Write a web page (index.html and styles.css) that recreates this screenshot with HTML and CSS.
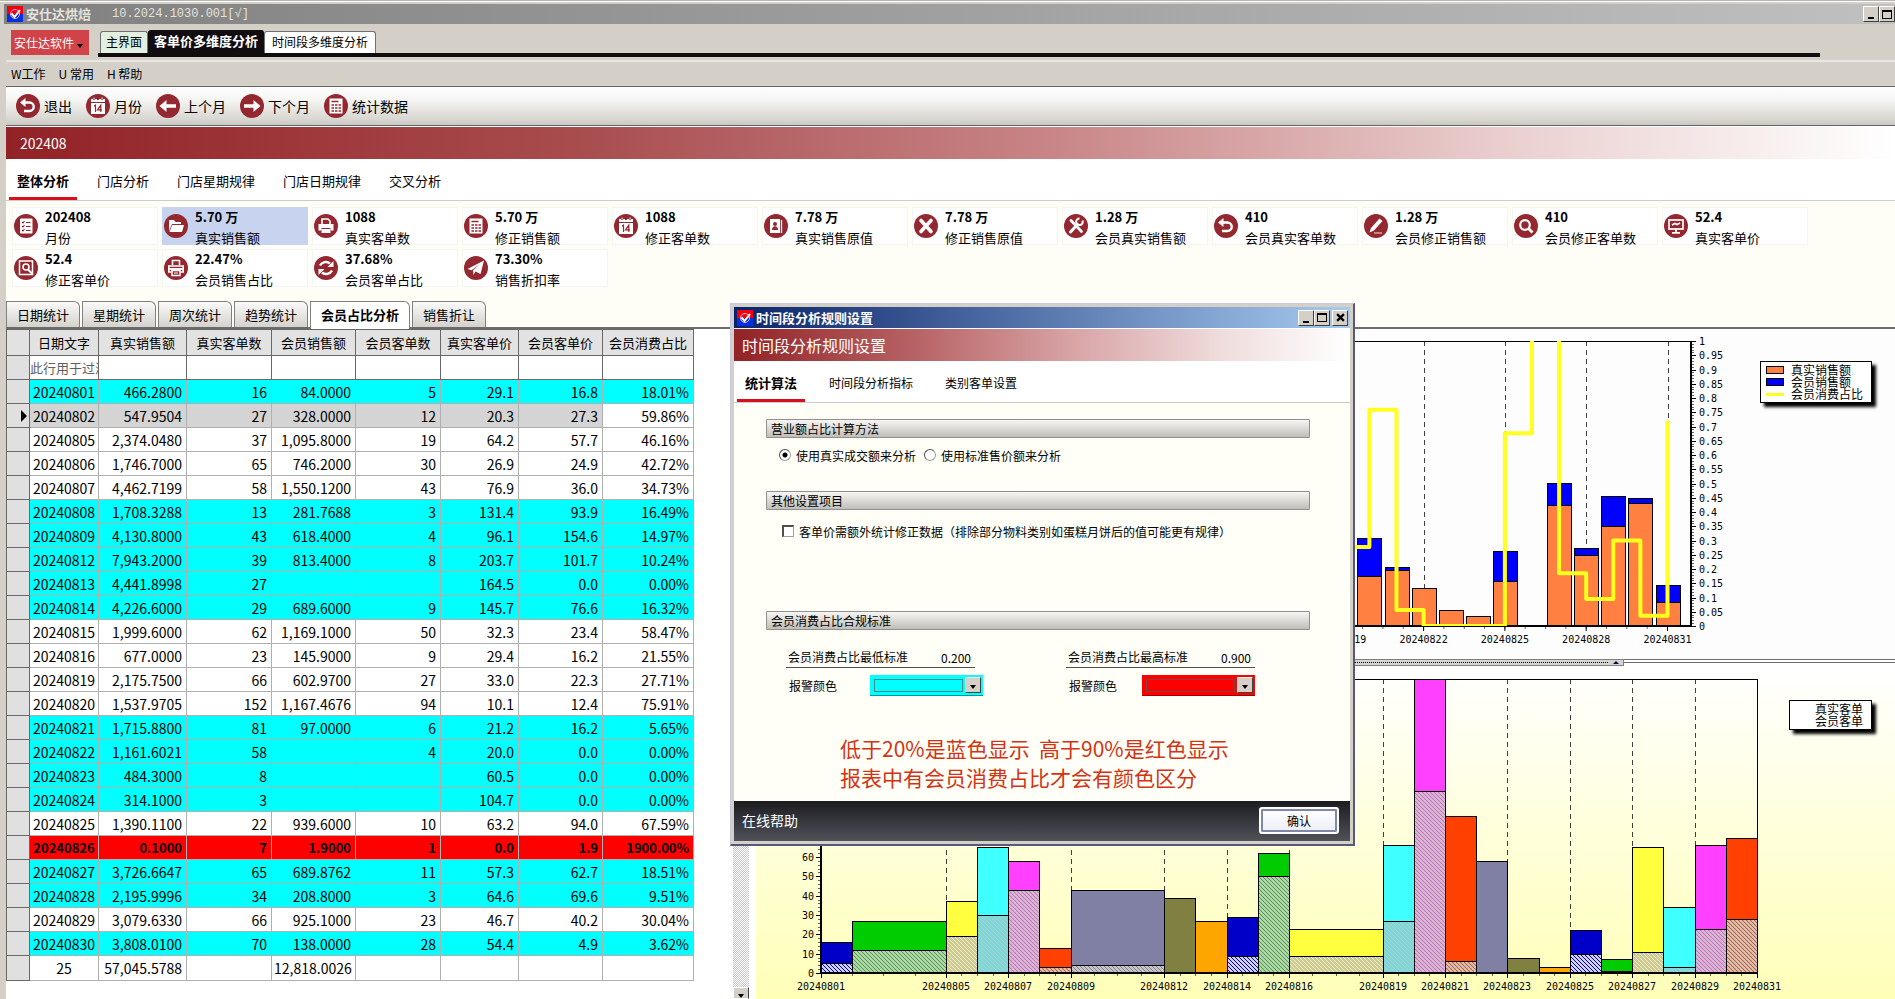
FILE: index.html
```html
<!DOCTYPE html>
<html lang="zh-CN">
<head>
  <meta charset="UTF-8">
  <title>安仕达烘焙</title>
  <link rel="stylesheet" href="styles.css">
</head>
<body>

  <svg class="sprite" aria-hidden="true">
    <symbol id="logo" viewBox="0 0 16 16">
      <rect width="16" height="8" fill="#f00010"/>
      <rect y="8" width="16" height="8" fill="#0030e0"/>
      <circle cx="8" cy="8" r="4.5" fill="none" stroke="#f0b0d0" stroke-width="1"/>
      <path d="M4.5 7.5l3 3.5L13 4" fill="none" stroke="#fff" stroke-width="2"/>
    </symbol>
    <symbol id="undo" viewBox="0 0 24 24">
      <path d="M7 8.5h6.5a4.2 4.2 0 0 1 0 8.5H8" fill="none" stroke="#fff" stroke-width="2.4"/>
      <path d="M9.5 4v9L4 8.5z" fill="#fff"/>
    </symbol>
    <symbol id="calendar" viewBox="0 0 24 24">
      <path d="M5 5h14v3H5zM5 9h14v11H5z" fill="#fff"/>
      <path d="M8 3v3M12 3v3M16 3v3" stroke="#942830" stroke-width="2"/>
      <path d="M8 3.5v2M16 3.5v2" stroke="#fff"/>
      <path d="M8 12l1.5-1v7M16 15.8h-4.5l3.3-4.6V18" fill="none" stroke="#942830" stroke-width="1.2"/>
    </symbol>
    <symbol id="left" viewBox="0 0 24 24">
      <path d="M3.5 12l7-6v4.2H20v3.6h-9.500V18z" fill="#fff"/>
    </symbol>
    <symbol id="right" viewBox="0 0 24 24">
      <path d="M20.500 12l-7-6v4.200H4v3.600h9.500V18z" fill="#fff"/>
    </symbol>
    <symbol id="calc" viewBox="0 0 24 24">
      <rect x="5.500" y="4.500" width="13" height="15" fill="#fff"/>
      <path d="M7.500 7.500h7M7.500 11h2.500M11 11h2.500M14.500 11h2.500M7.500 14h2.500M11 14h2.500M14.500 14h2.500M7.500 17h2.500M11 17h2.500M14.500 17h2.500" stroke="#942830" stroke-width="1.700"/>
    </symbol>
    <symbol id="list" viewBox="0 0 24 24">
      <rect x="6" y="4.500" width="12.500" height="15" rx="1" fill="#fff"/>
      <path d="M8 8l1 1 1.500-2M8 12l1 1 1.500-2M8 16l1 1 1.500-2M12 8.500h4.500M12 12.500h4.500M12 16.500h4.500" fill="none" stroke="#942830" stroke-width="1.100"/>
    </symbol>
    <symbol id="folder" viewBox="0 0 24 24">
      <path d="M5 17V6h5l1.500 2H17v2H8z" fill="#fff"/>
      <path d="M8.200 11H20l-2 7H5.500z" fill="#fff"/>
    </symbol>
    <symbol id="printer" viewBox="0 0 24 24">
      <path d="M8 10V5h6l2 2v3" fill="none" stroke="#fff" stroke-width="1.600"/>
      <path d="M4.500 10h15v6.500h-3V14h-9v2.500h-3z" fill="#fff"/>
      <rect x="7.500" y="15" width="9" height="4" fill="#fff"/>
    </symbol>
    <symbol id="printer2" viewBox="0 0 24 24">
      <path d="M8.500 9V4.500h7V9M4.800 16V10h14.400v6z" fill="none" stroke="#fff" stroke-width="1.600"/>
      <path d="M4 12h16v2H4z" fill="#fff"/>
      <path d="M8 14.500h8v5H8z" fill="#942830" stroke="#fff" stroke-width="1.400"/>
      <path d="M10 17h4" stroke="#fff"/>
    </symbol>
    <symbol id="contact" viewBox="0 0 24 24">
      <path d="M6 5h10v14H6z" fill="#fff"/>
      <path d="M17.500 6v13" stroke="#fff" stroke-width="1.300"/>
      <circle cx="11" cy="10" r="2" fill="#942830"/>
      <path d="M8 16c0-5 6-5 6 0z" fill="#942830"/>
    </symbol>
    <symbol id="cross" viewBox="0 0 24 24">
      <path d="M7 6.500l10 11M17 6.500l-10 11" stroke="#fff" stroke-width="3.600" stroke-linecap="round"/>
    </symbol>
    <symbol id="tools" viewBox="0 0 24 24">
      <path d="M7 6.500l10.500 11" stroke="#fff" stroke-width="2.800" stroke-linecap="round"/>
      <path d="M6.500 18l7-7.500" stroke="#fff" stroke-width="3" stroke-linecap="round"/>
      <path d="M18.500 6.500a3.300 3.300 0 1 1-3-2" fill="none" stroke="#fff" stroke-width="2"/>
    </symbol>
    <symbol id="pencil" viewBox="0 0 24 24">
      <path d="M15.500 4.500l3 2.500-8.500 9.500-4.500 2 1.500-4.500z" fill="#fff"/>
      <path d="M10 19h8" stroke="#e0a0a0" stroke-width="1.500"/>
    </symbol>
    <symbol id="search" viewBox="0 0 24 24">
      <circle cx="11" cy="11" r="4.800" fill="none" stroke="#fff" stroke-width="2.200"/>
      <path d="M14.500 14.500l4 4" stroke="#fff" stroke-width="2.800"/>
    </symbol>
    <symbol id="monitor" viewBox="0 0 24 24">
      <rect x="5" y="6" width="14" height="9" fill="none" stroke="#fff" stroke-width="1.700"/>
      <path d="M8 11l3-1.500 2 1 3-1.500M12 15v3M8 18.800h8" fill="none" stroke="#fff" stroke-width="1.700"/>
    </symbol>
    <symbol id="docsearch" viewBox="0 0 24 24">
      <path d="M5.500 5h13v13.500h-13z" fill="none" stroke="#fff" stroke-width="1.500"/>
      <circle cx="12" cy="11" r="3" fill="none" stroke="#fff" stroke-width="1.600"/>
      <path d="M14 13.500l4.500 4.500" stroke="#fff" stroke-width="2"/>
    </symbol>
    <symbol id="refresh" viewBox="0 0 24 24">
      <path d="M6 9.500a6.500 6.500 0 0 1 10-2M18 14.500a6.500 6.500 0 0 1-10 2" fill="none" stroke="#fff" stroke-width="2.400"/>
      <path d="M19.500 5v6h-6zM4.500 19v-6h6z" fill="#fff"/>
    </symbol>
    <symbol id="send" viewBox="0 0 24 24">
      <path d="M3.500 13L20 4.500 16.500 18l-5-2.500L9.500 19l-.5-4.800L16 8l-8.500 6.300z" fill="#fff"/>
    </symbol>
  </svg>

  <div class="app">
    <header class="titlebar">
      <svg class="logo"><use href="#logo"/></svg>
      <span class="app-name">安仕达烘焙</span>
      <span class="app-version">10.2024.1030.001[√]</span>
      <span class="window-buttons">
        <button type="button" class="win-btn" aria-label="最小化"><i class="min"></i></button>
        <button type="button" class="win-btn" aria-label="最大化"><i class="max"></i></button>
      </span>
    </header>

    <div class="app-tabs">
      <button type="button" class="brand-menu">安仕达软件 <i class="caret"></i></button>
      <nav class="page-tabs">
        <a href="#" class="home">主界面</a>
        <a href="#" class="active">客单价多维度分析</a>
        <a href="#">时间段多维度分析</a>
      </nav>
    </div>

    <nav class="menu">
      <a href="#">W工作</a>
      <a href="#">U 常用</a>
      <a href="#">H 帮助</a>
    </nav>

    <div class="toolbar">
      <button type="button"><svg class="icon"><use href="#undo"/></svg>退出</button>
      <button type="button"><svg class="icon"><use href="#calendar"/></svg>月份</button>
      <button type="button"><svg class="icon"><use href="#left"/></svg>上个月</button>
      <button type="button"><svg class="icon"><use href="#right"/></svg>下个月</button>
      <button type="button"><svg class="icon"><use href="#calc"/></svg>统计数据</button>
    </div>

    <h1 class="banner">202408</h1>

    <nav class="sub-tabs">
      <a href="#" class="active">整体分析</a>
      <a href="#">门店分析</a>
      <a href="#">门店星期规律</a>
      <a href="#">门店日期规律</a>
      <a href="#">交叉分析</a>
    </nav>

    <section class="cards" id="cards"></section>

    <nav class="sheet-tabs">
      <a href="#">日期统计</a>
      <a href="#">星期统计</a>
      <a href="#">周次统计</a>
      <a href="#">趋势统计</a>
      <a href="#" class="active">会员占比分析</a>
      <a href="#">销售折让</a>
    </nav>

    <main class="workspace">
      <div class="table-pane">
        <table id="salesTable">
          <colgroup>
            <col class="c-mark"><col class="c-date"><col class="c-sale"><col class="c-num"><col class="c-msale">
            <col class="c-num"><col class="c-price"><col class="c-mprice"><col>
          </colgroup>
          <thead>
            <tr>
              <th></th>
              <th>日期文字</th>
              <th>真实销售额</th>
              <th>真实客单数</th>
              <th>会员销售额</th>
              <th>会员客单数</th>
              <th>真实客单价</th>
              <th>会员客单价</th>
              <th>会员消费占比</th>
            </tr>
            <tr class="filter">
              <td></td><td>此行用于过滤</td><td></td><td></td><td></td><td></td><td></td><td></td><td></td>
            </tr>
          </thead>
          <tbody></tbody>
          <tfoot>
            <tr>
              <td></td><td>25</td><td>57,045.5788</td><td></td><td>12,818.0026</td><td></td><td></td><td></td><td></td>
            </tr>
          </tfoot>
        </table>
      </div>
      <div class="scrollbar"><span class="scroll-btn"><i class="caret"></i></span></div>
      <div class="charts">
        <section class="chart chart-sales">
          <svg id="salesChart"></svg>
          <ul class="legend">
            <li><i class="swatch orange"></i>真实销售额</li>
            <li><i class="swatch blue"></i>会员销售额</li>
            <li><i class="swatch line"></i>会员消费占比</li>
          </ul>
        </section>
        <div class="splitter"><span class="grip"><i></i></span></div>
        <section class="chart chart-orders">
          <svg id="ordersChart"></svg>
          <ul class="legend">
            <li><i class="swatch"></i>真实客单</li>
            <li><i class="swatch"></i>会员客单</li>
          </ul>
        </section>
      </div>
    </main>

    <!-- Rule settings window -->
    <div class="dialog" role="dialog" aria-labelledby="dialogTitle">
      <div class="dialog-title">
        <svg class="logo"><use href="#logo"/></svg>
        <span id="dialogTitle">时间段分析规则设置</span>
        <span class="window-buttons">
          <button type="button" class="win-btn" aria-label="最小化"><i class="min"></i></button>
          <button type="button" class="win-btn" aria-label="最大化"><i class="max"></i></button>
          <button type="button" class="win-btn close" aria-label="关闭"><svg viewBox="0 0 8 8"><path d="M1 1l6 6M7 1L1 7" stroke="#000" stroke-width="2"/></svg></button>
        </span>
      </div>
      <h2 class="banner">时间段分析规则设置</h2>
      <nav class="sub-tabs">
        <a href="#" class="active">统计算法</a>
        <a href="#">时间段分析指标</a>
        <a href="#">类别客单设置</a>
      </nav>
      <form class="dialog-body">
        <h3>营业额占比计算方法</h3>
        <div class="row">
          <label><input type="radio" name="method" checked>使用真实成交额来分析</label>
          <label><input type="radio" name="method">使用标准售价额来分析</label>
        </div>
        <h3>其他设置项目</h3>
        <div class="row row-check">
          <label><input type="checkbox">客单价需额外统计修正数据（排除部分物料类别如蛋糕月饼后的值可能更有规律）</label>
        </div>
        <h3>会员消费占比合规标准</h3>
        <div class="limits">
          <div class="limit">
            <div class="limit-value">
              <label for="minRate">会员消费占比最低标准</label>
              <input type="text" id="minRate" value="0.200">
            </div>
            <div class="limit-color">
              <label for="minColor">报警颜色</label>
              <span class="combo cyan"><select id="minColor"></select><span class="drop"><i class="caret"></i></span></span>
            </div>
          </div>
          <div class="limit">
            <div class="limit-value">
              <label for="maxRate">会员消费占比最高标准</label>
              <input type="text" id="maxRate" value="0.900">
            </div>
            <div class="limit-color high">
              <label for="maxColor">报警颜色</label>
              <span class="combo red"><select id="maxColor"></select><span class="drop"><i class="caret"></i></span></span>
            </div>
          </div>
        </div>
        <p class="hint">低于20%是蓝色显示&nbsp; 高于90%是红色显示<br>报表中有会员消费占比才会有颜色区分</p>
      </form>
      <footer class="dialog-footer">
        <a href="#">在线帮助</a>
        <button type="button">确认</button>
      </footer>
    </div>
  </div>

  <script src="script.js"></script>
</body>
</html>
```
FILE: styles.css
```css
* {
  box-sizing: border-box;
}
body {
  margin: 0;
  font-family: "Noto Sans CJK SC", sans-serif;
  font-size: 13px;
  color: #000;
  background-color: #d4d0c8;
}
a {
  color: inherit;
  text-decoration: none;
}
button, input, select {
  font-family: inherit;
  margin: 0;
}
h1, h2, h3, p, ul {
  margin: 0;
  padding: 0;
  font-weight: normal;
  list-style: none;
}
.sprite {
  position: absolute;
  width: 0;
  height: 0;
}
.app {
  position: relative;
  height: 100vh;
  overflow: hidden;
  padding: 4px 0 0 6px;
  border-left: 1px solid #f0f0f0;
  margin-left: -1px;
  display: flex;
  flex-direction: column;
  box-shadow: inset 0 1px 0 #b8b4b0, inset 0 2px 0 #fff;
}
.caret {
  display: inline-block;
  border: 3px solid transparent;
  border-top: 4px solid #000;
  border-bottom: 0;
}

/* title bar */
.titlebar {
  flex: 0 0 20px;
  display: flex;
  align-items: center;
  margin-left: -2px;
  padding-left: 3px;
  line-height: 20px;
  color: #e4e2dc;
  background: linear-gradient(to right, #808080, #c0c0c0);
}
.logo {
  width: 16px;
  height: 16px;
  flex: none;
}
.app-name {
  margin-left: 3px;
  font-weight: bold;
}
.app-version {
  margin-left: 21px;
  font-family: "Liberation Mono", "Noto Sans CJK SC", monospace;
  font-size: 12px;
}
.window-buttons {
  margin-left: auto;
  display: flex;
}
.win-btn {
  width: 16px;
  height: 16px;
  padding: 0;
  display: flex;
  align-items: center;
  justify-content: center;
  background: #d4d0c8;
  border: 1px solid #fff;
  border-right-color: #404040;
  border-bottom-color: #404040;
}
.win-btn .min {
  width: 6px;
  height: 2px;
  margin-top: 8px;
  background: #000;
}
.win-btn .max {
  width: 10px;
  height: 9px;
  border: 1px solid #000;
  border-top-width: 2px;
}
.win-btn.close {
  margin-left: 2px;
}
.win-btn svg {
  width: 9px;
  height: 9px;
}

/* page tabs */
.app-tabs {
  flex: 0 0 36px;
  display: flex;
  align-items: flex-start;
  padding: 6px 75px 0 5px;
}
.brand-menu {
  width: 78px;
  height: 25px;
  padding: 0 0 0 3px;
  border: 0;
  font-size: 12px;
  text-align: left;
  color: #fff;
  background: #d04449;
}
.page-tabs {
  flex: 1;
  display: flex;
  align-items: flex-end;
  height: 27px;
  margin-left: 9px;
  padding-left: 2px;
  border-bottom: 4px solid #100c10;
}
.page-tabs a {
  height: 22px;
  padding: 0 7px;
  font-size: 12px;
  line-height: 20px;
  background: #fff;
  border: 1px solid #707070;
  border-bottom: 0;
  border-radius: 3px 3px 0 0;
}
.page-tabs .home {
  padding: 0 5px;
  background: #e2f0e2;
}
.page-tabs .active {
  height: 23px;
  padding: 0 5px;
  font-size: 13px;
  font-weight: bold;
  color: #fff;
  background: #100c10;
  border-color: #100c10;
}

/* menu and toolbar */
.menu {
  flex: 0 0 27px;
  display: flex;
  gap: 13px;
  padding-left: 5px;
  font-size: 12px;
  line-height: 24px;
  border-top: 2px solid #e8e6e4;
  border-bottom: 1px solid #646464;
}
.toolbar {
  flex: 0 0 39px;
  display: flex;
  align-items: center;
  gap: 14px;
  padding-left: 10px;
  background: linear-gradient(#fff, #f4f4f2 35%, #d8d6d0 85%, #cac8c2);
  border-bottom: 1px solid #646464;
}
.toolbar button {
  display: flex;
  align-items: center;
  gap: 4px;
  padding: 0;
  border: 0;
  font-size: 14px;
  background: none;
}
.icon {
  flex: none;
  width: 24px;
  height: 24px;
  border-radius: 50%;
  background: #942830;
}
.banner {
  flex: 0 0 33px;
  padding-left: 14px;
  font-size: 14px;
  line-height: 32px;
  color: #fff;
  background: linear-gradient(to right, #922226, #a84c4e 30%, #c88486 55%, #ebd0d0 80%, #fff);
  border-top: 1px solid #fff;
}

/* underlined tabs */
.sub-tabs {
  flex: 0 0 42px;
  display: flex;
  gap: 12px;
  padding-left: 3px;
  background: #fff;
  border-bottom: 1px solid #cccccc;
}
.sub-tabs a {
  height: 41px;
  padding: 8px 8px 0;
  line-height: 28px;
  border-bottom: 3px solid transparent;
}
.sub-tabs .active {
  font-weight: bold;
  border-bottom-color: #d8101c;
}

/* figures */
.cards {
  display: flex;
  flex-wrap: wrap;
  gap: 4px;
  padding: 6px 6px 14px 6px;
  background: #fffef6;
}
.card {
  display: flex;
  align-items: center;
  gap: 7px;
  width: 146px;
  height: 38px;
  padding-left: 1px;
  background: #fff;
  border: 1px solid #f4f4f0;
}
.card.selected {
  background: #c8d4ef;
  border-color: #c8d4ef;
}
.card-text {
  align-self: flex-start;
  white-space: nowrap;
}
.card-text b {
  display: block;
  line-height: 18px;
}
.card-text span {
  display: block;
  line-height: 24px;
}
.sheet-tabs {
  flex: none;
  display: flex;
  gap: 2px;
  background: #fffef6;
  border-bottom: 2px solid #6c6c6c;
}
.sheet-tabs a {
  height: 26px;
  padding: 0 10px;
  line-height: 26px;
  background: linear-gradient(#fafafa, #d4d2cc);
  border: 1px solid #808080;
  border-bottom: 0;
  border-top-right-radius: 6px;
}
.sheet-tabs .active {
  height: 28px;
  margin-bottom: -2px;
  font-weight: bold;
  background: #fff;
}

/* work area */
.workspace {
  flex: 1;
  min-height: 0;
  display: grid;
  grid-template-columns: minmax(690px, 727fr) 16px minmax(0, 1146fr);
  background: #fff;
}
.table-pane {
  overflow: hidden;
}
table {
  width: 688px;
  table-layout: fixed;
  border-collapse: collapse;
}
.c-mark { width: 23px; }
.c-date { width: 69px; }
.c-sale { width: 88px; }
.c-num { width: 85px; }
.c-msale { width: 84px; }
.c-price { width: 78px; }
.c-mprice { width: 84px; }
th, td {
  height: 24px;
  padding: 0 4px 0 2px;
  overflow: hidden;
  white-space: nowrap;
  text-align: right;
  font-size: 14px;
  line-height: 20px;
  border: 1px solid #b0b0b0;
}
th {
  height: 26px;
  padding: 0;
  font-size: 13px;
  font-weight: normal;
  text-align: center;
  background: #e2e2e2;
  border-color: #686868;
}
tr td:first-child {
  padding: 0 2px;
  background: #e0e0e0;
  border-color: #686868;
}
td:nth-child(2) {
  text-align: center;
  padding: 0 2px;
}
.filter td {
  font-size: 13px;
  color: #606060;
  text-align: left;
  text-overflow: clip;
  border-color: #686868;
}
.filter td:nth-child(2) {
  padding: 0;
  text-align: left;
}
.low td {
  background: #00ffff;
}
.high-rate td {
  font-size: 13px;
  font-weight: bold;
  background: #ff0000;
}
.current td {
  background: #d4d4d4;
}
.current td:last-child {
  background: #fff;
}
.current td:first-child::before {
  content: "";
  display: block;
  margin-left: auto;
  width: 0;
  border: 6px solid transparent;
  border-left: 6px solid #000;
  border-right: 0;
}
tfoot td {
  height: 25px;
}
.scrollbar {
  display: flex;
  align-items: flex-end;
  background: repeating-conic-gradient(#c8c8c8 0 25%, #fff 0 50%) 0 0 / 2px 2px;
}
.scroll-btn {
  width: 16px;
  height: 12px;
  text-align: center;
  line-height: 10px;
  background: #d4d0c8;
  border: 1px solid #fff;
  border-right-color: #404040;
}
.charts {
  display: flex;
  flex-direction: column;
  min-height: 0;
  padding-left: 7px;
}
.chart {
  display: flex;
  align-items: flex-start;
  min-height: 0;
}
.chart svg {
  flex: 1;
  min-width: 0;
  height: 100%;
}
.chart text {
  font-family: "DejaVu Sans Mono", monospace;
  font-size: 10px;
}
.chart-sales {
  flex: 0 0 330px;
  background: #fdfdfd;
}
.chart-orders {
  flex: 1;
  background: linear-gradient(#fff, #ffffb8);
}
.legend {
  flex: none;
  margin: 32px 23px 0 0;
  padding: 2px 8px 2px 5px;
  font-size: 12px;
  line-height: 12px;
  background: #fff;
  border: 1px solid #000;
  box-shadow: 4px 4px 3px #000;
}
.legend li {
  display: flex;
  align-items: center;
  gap: 7px;
}
.chart-orders .legend {
  margin-top: 34px;
  padding-left: 0;
}
.swatch {
  width: 18px;
  height: 8px;
}
.orange {
  background: #ff8040;
  border: 1px solid #000;
}
.blue {
  background: #0000ff;
  border: 1px solid #000;
}
.line {
  height: 3px;
  background: #ffff20;
}
.splitter {
  flex: 0 0 7px;
  display: flex;
  justify-content: center;
  background: linear-gradient(#707070 1px, #fff 1px 3px, #707070 3px 4px, #fff 4px);
}
.grip {
  width: 596px;
  display: flex;
  justify-content: flex-end;
  align-items: center;
  padding: 0 4px 0 10px;
  background: #d4d4d0;
  border: 1px solid #808080;
  border-left: 0;
}
.grip::before {
  content: "";
  flex: 1;
  margin-right: 5px;
  border-top: 1px dotted #000;
}
.grip i {
  border: 3px solid transparent;
  border-bottom: 3px solid #000040;
  border-top: 0;
}

/* settings window */
.dialog {
  position: absolute;
  left: 730px;
  top: 303px;
  width: 625px;
  height: 543px;
  display: flex;
  flex-direction: column;
  padding: 3px;
  background: #d4d0c8;
  border: 1px solid #c8c8e0;
  border-right: 2px solid #58587c;
  border-bottom: 2px solid #58587c;
}
.dialog-title {
  flex: 0 0 21px;
  display: flex;
  align-items: center;
  padding: 0 2px 0 3px;
  font-weight: bold;
  line-height: 20px;
  color: #fff;
  background: linear-gradient(to right, #0a246a, #a6caf0);
}
.dialog-title .logo {
  margin-right: 3px;
}
.dialog .banner {
  padding-left: 8px;
  font-size: 16px;
  background: linear-gradient(to right, #922226, #b86466 30%, #d8a4a6 55%, #f0dede 80%, #fff);
}
.dialog .sub-tabs {
  gap: 16px;
}
.dialog .sub-tabs a {
  font-size: 12px;
}
.dialog .sub-tabs .active {
  font-size: 13px;
}
.dialog-body {
  flex: 1;
  padding: 16px 40px 0 32px;
  font-size: 12px;
  background: #fffff8;
}
.dialog-body h3 {
  height: 19px;
  padding-left: 4px;
  font-size: 12px;
  line-height: 18px;
  background: linear-gradient(#f6f6f4, #dcdad6 50%, #c0beb8);
  border: 1px solid #909090;
  border-radius: 1px;
}
.row {
  display: flex;
  gap: 8px;
  height: 24px;
  margin: 5px 0 24px;
  padding-left: 13px;
}
.row label {
  display: flex;
  align-items: center;
}
.row input {
  appearance: none;
  width: 12px;
  height: 12px;
  margin-right: 5px;
  background: #fff;
  border: 1px solid #a0a0a0;
  border-top: 2px solid #505050;
  border-left: 2px solid #505050;
}
.row input[type="radio"] {
  border-width: 1px;
  border-radius: 50%;
}
.row input[type="radio"]:checked {
  background: radial-gradient(#000 2px, #fff 3px);
}
.row-check {
  margin: 9px 0 68px;
  padding-left: 16px;
}
.limits {
  display: grid;
  grid-template-columns: 189px 189px;
  column-gap: 91px;
  margin-top: 18px;
  padding-left: 20px;
}
.limit-value {
  display: flex;
  height: 20px;
  padding: 0 4px 0 2px;
  line-height: 18px;
  border-bottom: 1px solid #505050;
}
.limit-value input {
  flex: 1;
  min-width: 0;
  padding: 0;
  border: 0;
  font-size: 12px;
  text-align: right;
  background: none;
}
.limit-color {
  display: flex;
  width: 197px;
  margin-top: 7px;
  padding-left: 3px;
  line-height: 21px;
}
.limit-color.high {
  width: 189px;
}
.combo {
  display: flex;
  width: 113px;
  height: 21px;
  margin-left: auto;
  padding: 2px 2px 2px 4px;
  border-bottom: 1px solid rgba(0, 0, 0, 0.4);
}
.combo select {
  appearance: none;
  flex: 1;
  margin: 2px 2px 1px 0;
  padding: 0;
  background: none;
  border: 1px solid rgba(90, 90, 90, 0.7);
}
.cyan {
  background: #00ffff;
}
.red {
  background: #ff0000;
}
.drop {
  width: 16px;
  text-align: center;
  line-height: 12px;
  background: #d4d0c8;
  border: 1px solid #f0f0f0;
  border-right-color: #404040;
  border-bottom-color: #404040;
}
.hint {
  margin-top: 38px;
  padding-left: 74px;
  font-size: 21px;
  line-height: 29px;
  color: #d23414;
  white-space: nowrap;
}
.dialog-footer {
  flex: 0 0 40px;
  display: flex;
  align-items: center;
  justify-content: space-between;
  padding: 0 11px 2px 8px;
  color: #fff;
  font-size: 14px;
  background: linear-gradient(#1c1c20, #50525a);
}
.dialog-footer button {
  width: 80px;
  height: 27px;
  padding: 0;
  font-size: 12px;
  background: linear-gradient(#fff, #eceef6);
  border: 2px solid #fff;
  border-radius: 3px;
  box-shadow: inset 0 0 0 2px #8088a8;
}
```
FILE: script.js
```javascript
// date, sales, orders, member sales, member orders, price, member price, member rate
const rows = [
  ["20240801", "466.2800", "16", "84.0000", "5", "29.1", "16.8", "18.01%"],
  ["20240802", "547.9504", "27", "328.0000", "12", "20.3", "27.3", "59.86%"],
  ["20240805", "2,374.0480", "37", "1,095.8000", "19", "64.2", "57.7", "46.16%"],
  ["20240806", "1,746.7000", "65", "746.2000", "30", "26.9", "24.9", "42.72%"],
  ["20240807", "4,462.7199", "58", "1,550.1200", "43", "76.9", "36.0", "34.73%"],
  ["20240808", "1,708.3288", "13", "281.7688", "3", "131.4", "93.9", "16.49%"],
  ["20240809", "4,130.8000", "43", "618.4000", "4", "96.1", "154.6", "14.97%"],
  ["20240812", "7,943.2000", "39", "813.4000", "8", "203.7", "101.7", "10.24%"],
  ["20240813", "4,441.8998", "27", "", "", "164.5", "0.0", "0.00%"],
  ["20240814", "4,226.6000", "29", "689.6000", "9", "145.7", "76.6", "16.32%"],
  ["20240815", "1,999.6000", "62", "1,169.1000", "50", "32.3", "23.4", "58.47%"],
  ["20240816", "677.0000", "23", "145.9000", "9", "29.4", "16.2", "21.55%"],
  ["20240819", "2,175.7500", "66", "602.9700", "27", "33.0", "22.3", "27.71%"],
  ["20240820", "1,537.9705", "152", "1,167.4676", "94", "10.1", "12.4", "75.91%"],
  ["20240821", "1,715.8800", "81", "97.0000", "6", "21.2", "16.2", "5.65%"],
  ["20240822", "1,161.6021", "58", "", "4", "20.0", "0.0", "0.00%"],
  ["20240823", "484.3000", "8", "", "", "60.5", "0.0", "0.00%"],
  ["20240824", "314.1000", "3", "", "", "104.7", "0.0", "0.00%"],
  ["20240825", "1,390.1100", "22", "939.6000", "10", "63.2", "94.0", "67.59%"],
  ["20240826", "0.1000", "7", "1.9000", "1", "0.0", "1.9", "1900.00%"],
  ["20240827", "3,726.6647", "65", "689.8762", "11", "57.3", "62.7", "18.51%"],
  ["20240828", "2,195.9996", "34", "208.8000", "3", "64.6", "69.6", "9.51%"],
  ["20240829", "3,079.6330", "66", "925.1000", "23", "46.7", "40.2", "30.04%"],
  ["20240830", "3,808.0100", "70", "138.0000", "28", "54.4", "4.9", "3.62%"]
];

const cards = [
  ["list", "202408", "月份"],
  ["folder", "5.70 万", "真实销售额"],
  ["printer", "1088", "真实客单数"],
  ["calc", "5.70 万", "修正销售额"],
  ["calendar", "1088", "修正客单数"],
  ["contact", "7.78 万", "真实销售原值"],
  ["cross", "7.78 万", "修正销售原值"],
  ["tools", "1.28 万", "会员真实销售额"],
  ["undo", "410", "会员真实客单数"],
  ["pencil", "1.28 万", "会员修正销售额"],
  ["search", "410", "会员修正客单数"],
  ["monitor", "52.4", "真实客单价"],
  ["docsearch", "52.4", "修正客单价"],
  ["printer2", "22.47%", "会员销售占比"],
  ["refresh", "37.68%", "会员客单占比"],
  ["send", "73.30%", "销售折扣率"]
];

document.getElementById("cards").innerHTML = cards.map(([icon, value, label], i) => `
  <div class="card${i === 1 ? " selected" : ""}">
    <svg class="icon"><use href="#${icon}"/></svg>
    <div class="card-text"><b>${value}</b><span>${label}</span></div>
  </div>`).join("");

const num = s => parseFloat(s.replace(/,/g, "")) || 0;

function rowClass(row) {
  const rate = num(row[7]);
  if (row[0] === "20240802") return "current";
  if (rate < 20) return "low";
  if (rate > 90) return "high-rate";
  return "";
}

document.querySelector("#salesTable tbody").innerHTML = rows.map(row =>
  `<tr class="${rowClass(row)}"><td></td>${row.map(v => `<td>${v}</td>`).join("")}</tr>`
).join("");

const line = (x1, y1, x2, y2, extra = "") =>
  `<line x1="${x1}" y1="${y1}" x2="${x2}" y2="${y2}" stroke="#000" ${extra}/>`;
const rect = (x, y, w, h, fill) =>
  `<rect x="${x}" y="${y}" width="${w}" height="${h}" fill="${fill}" stroke="#000"/>`;
const text = (x, y, s, anchor = "middle") =>
  `<text x="${x}" y="${y}" text-anchor="${anchor}">${s}</text>`;
const dashed = 'stroke-dasharray="5 4" stroke-opacity="0.75"';

function drawSales() {
  const top = 12, base = 297, left = 76, right = 935;
  const x = d => 911.5 - 27.1 * (31 - d);
  const y = v => base - v * (base - top);
  let out = line(left, top + 0.5, right, top + 0.5);

  [22, 25, 28, 31].forEach(d => out += line(Math.round(x(d)) + 0.5, top, Math.round(x(d)) + 0.5, base, dashed));

  const data = rows.map(r => ({ day: +r[0].slice(6), sale: num(r[1]), member: num(r[3]), rate: num(r[7]) / 100 }));
  data.push({ day: 31, sale: 727, member: 526, rate: 0.72 });

  data.forEach(p => {
    if (p.sale < 1) return;
    const bx = Math.round(x(p.day) - 12) + 0.5;
    const y1 = Math.round(y(p.sale / 8800)) + 0.5;
    const y2 = Math.round(y((p.sale + p.member) / 8800)) + 0.5;
    out += rect(bx, y1, 24, base - y1, "#ff8040");
    if (p.member) out += rect(bx, y2, 24, y1 - y2, "#0000ff");
  });

  out += line(left, base, right, base, 'stroke-width="2"') + line(right, top, right, base + 1, 'stroke-width="2"');

  // stepped rate line, cut off at the top of the plot
  let path = "";
  data.forEach((p, i) => {
    const py = Math.max(y(p.rate), top - 60);
    path += i ? `H${x(p.day)}V${py}` : `M${x(p.day)} ${py}`;
  });
  out += `<clipPath id="plot"><rect x="${left}" y="${top}" width="${right - left}" height="${base - top}"/></clipPath>`;
  out += `<path d="${path}" clip-path="url(#plot)" fill="none" stroke="#ffff20" stroke-width="4" stroke-linejoin="round"/>`;

  for (let i = 0; i <= 20; i++) {
    const ty = Math.round(y(i / 20));
    out += line(right, ty + 0.5, right + 5, ty + 0.5);
    out += text(943, ty + 4, String(i / 20), "start");
    for (let k = 1; k < 5 && i < 20; k++) {
      const my = Math.round(y((i + k / 5) / 20)) + 0.5;
      out += line(right, my, right + 3, my, 'stroke-opacity="0.6"');
    }
  }
  [19, 22, 25, 28, 31].forEach(d => {
    out += line(x(d), base, x(d), base + 5) + text(x(d), 314, "202408" + d);
  });
  for (let d = 19; d < 31; d += 0.75) out += line(x(d), base, x(d), base + 3, 'stroke-opacity="0.6"');
  document.getElementById("salesChart").innerHTML = out;
}

function drawOrders() {
  const top = 13, base = 307, left = 65, right = 1001;
  const colors = ["#0000c8", "#00cc00", "#ffff40", "#40ffff", "#ff40ff", "#ff4000", "#8080a4", "#808040", "#ffa500"];
  const x = d => Math.round(left + 31.2 * (d - 1));
  const y = v => Math.round(base - v * 1.934);
  const ticks = [1, 5, 7, 9, 12, 14, 16, 19, 21, 23, 25, 27, 29, 31];
  let out = "";

  colors.forEach((c, i) => {
    const back = i === 0 ? "#d0d0ff" : i === 3 ? "#a0c8c8" : "#c8c4c0";
    out += `<pattern id="hatch${i}" width="4" height="4" patternUnits="userSpaceOnUse">
      <rect width="4" height="4" fill="${back}"/><path d="M-1 -1L5 5M3 -1L5 1M-1 3L1 5" stroke="${c}" stroke-width="1"/></pattern>`;
  });
  out += line(left, top + 0.5, right, top + 0.5) + line(right + 0.5, top, right + 0.5, base);
  ticks.slice(1, -1).forEach(d => out += line(x(d) + 0.5, top, x(d) + 0.5, base, dashed));

  rows.forEach((r, i) => {
    const from = +r[0].slice(6);
    const to = i + 1 < rows.length ? +rows[i + 1][0].slice(6) : 31;
    const c = i % 9;
    const total = y(num(r[2])) + 0.5, member = y(num(r[4])) + 0.5;
    out += rect(x(from) + 0.5, total, x(to) - x(from), base - total, colors[c]);
    if (num(r[4]) && c !== 7 && r[0] !== "20240822") {
      out += rect(x(from) + 0.5, member, x(to) - x(from), base - member, `url(#hatch${c})`);
    }
  });

  out += line(left, base, right + 1, base, 'stroke-width="2"') + line(left, top, left, base + 1, 'stroke-width="2"');
  for (let v = 0; v <= 60; v += 10) {
    out += line(left - 5, y(v) + 0.5, left, y(v) + 0.5) + text(left - 7, y(v) + 4, v, "end");
    for (let k = 2; k < 10; k += 2) out += line(left - 3, y(v + k) + 0.5, left, y(v + k) + 0.5, 'stroke-opacity="0.6"');
  }
  ticks.forEach((d, i) => {
    out += line(x(d) + 0.5, base, x(d) + 0.5, base + 5) + text(x(d), 324, "202408" + String(d).padStart(2, "0"));
    const next = ticks[i + 1];
    for (let k = 1; k < 4 && next; k++) {
      const mx = x(d + (next - d) * k / 4) + 0.5;
      out += line(mx, base, mx, base + 3, 'stroke-opacity="0.6"');
    }
  });
  document.getElementById("ordersChart").innerHTML = out;
}

drawSales();
drawOrders();
```
